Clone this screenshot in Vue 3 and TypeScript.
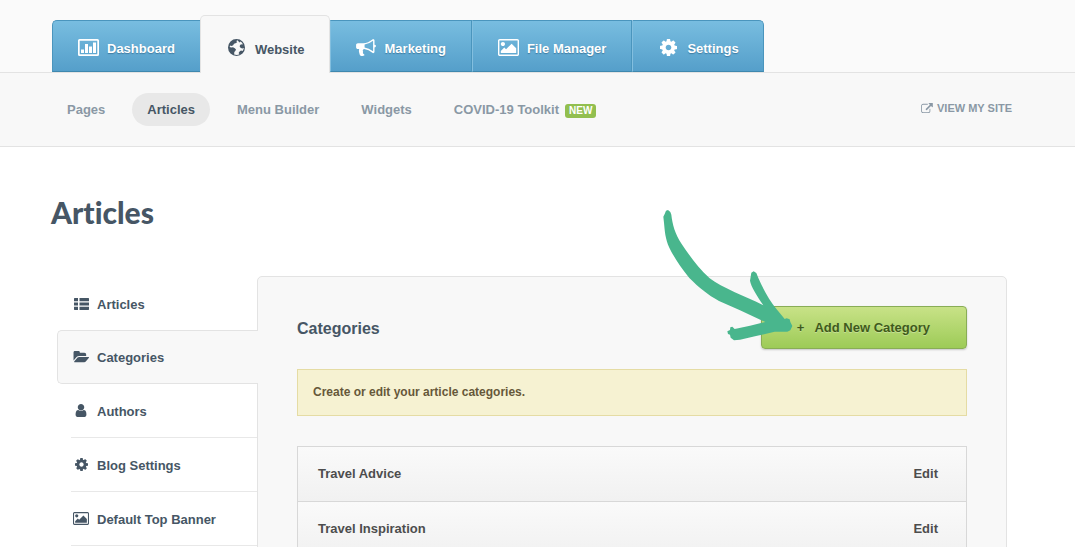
<script setup lang="ts">
interface Icon {
  box: string
  width: number
  height: number
  path: string
}

interface NavItem {
  label: string
  icon: Icon
  active?: boolean
}

const picturePath =
  'M640 576q0 80-56 136t-136 56-136-56-56-136 56-136 136-56 136 56 56 136zm1024 384v448h-1408v-192l320-320 160 160 512-512zm96-704h-1600q-13 0-22.5 9.5t-9.5 22.5v1216q0 13 9.5 22.5t22.5 9.5h1600q13 0 22.5-9.5t9.5-22.5v-1216q0-13-9.5-22.5t-22.5-9.5zm160 32v1216q0 66-47 113t-113 47h-1600q-66 0-113-47t-47-113v-1216q0-66 47-113t113-47h1600q66 0 113 47t47 113z'
const cogPath =
  'M1152 896q0-106-75-181t-181-75-181 75-75 181 75 181 181 75 181-75 75-181zm512-109v222q0 12-8 23t-20 13l-185 28q-19 54-39 91 35 50 107 138 10 12 10 25t-9 23q-27 37-99 108t-94 71q-12 0-26-9l-138-108q-44 23-91 38-16 136-29 186-7 28-36 28h-222q-14 0-24.5-8.5t-11.5-21.5l-28-184q-49-16-90-37l-141 107q-10 9-25 9-14 0-25-11-126-114-165-168-7-10-7-23 0-12 8-23 15-21 51-66.5t54-70.5q-27-50-41-99l-183-27q-13-2-21-12.5t-8-23.5v-222q0-12 8-23t19-13l186-28q14-46 39-92-40-57-107-138-10-12-10-24 0-10 9-23 26-36 98.5-107.5t94.5-71.5q13 0 26 10l138 107q44-23 91-38 16-136 29-186 7-28 36-28h222q14 0 24.5 8.5t11.5 21.5l28 184q49 16 90 37l142-107q9-9 24-9 13 0 25 10 129 119 165 170 7 8 7 22 0 12-8 23-15 21-51 66.5t-54 70.5q26 50 41 98l183 28q13 2 21 12.5t8 23.5z'

const tabs: NavItem[] = [
  {
    label: 'Dashboard',
    icon: {
      box: '0 0 21 17',
      width: 21,
      height: 17,
      path: 'M1.5 0h18a1.5 1.5 0 0 1 1.5 1.5v14a1.5 1.5 0 0 1-1.5 1.5h-18a1.5 1.5 0 0 1-1.5-1.5v-14a1.5 1.5 0 0 1 1.5-1.5zM1.7 1.7v13.6h17.6v-13.6zM3 10.500h3v3.500h-3zM7 5h3v9h-3zM11 7.500h3v6.500h-3zM15 3.500h3v10.500h-3z',
    },
  },
  {
    label: 'Website',
    active: true,
    icon: {
      box: '0 0 17 17',
      width: 17,
      height: 17,
      path: 'M8.500 0a8.500 8.500 0 1 1 0 17a8.500 8.500 0 1 1 0-17zM9.500 1.200L8.300 2L9.200 3.200L7.500 4.200L6 4.800L5.200 6.300L3.600 6.900L2.200 6.400L1.600 8L3.200 8.600L5 8.300L6.800 9.200L8 10.600L7.300 12L6.300 13L6.200 15.500C8 16.200 10 16.100 11.500 15.300L10.600 14L11.600 12.600L13 11.600L14.600 12A7.600 7.600 0 0 0 15.900 9L14.200 9.600L12.500 8.800L11.600 7.300L12.300 5.800L14 5.200L15 5.500A7.500 7.500 0 0 0 12.600 2.500L11.500 3.500L10.600 2.600Z',
    },
  },
  {
    label: 'Marketing',
    icon: {
      box: '0 128 1792 1536',
      width: 20,
      height: 17,
      path: 'M1664 640q53 0 90.5 37.5t37.5 90.5-37.5 90.5-90.5 37.5v384q0 52-38 90t-90 38q-417-347-812-380-58 19-91 66t-31 100.5 40 92.5q-20 33-23 65.5t6 58 33.5 55 48 50 61.5 50.5q-29 58-111.5 83t-168.5 11.5-132-55.5q-7-23-29.5-87.5t-32-94.5-23-89-15-101 3.5-98.5 22-110.5h-122q-66 0-113-47t-47-113v-192q0-66 47-113t113-47h480q435 0 896-384 52 0 90 38t38 90v384zm-128 604v-954q-394 302-768 343v270q377 42 768 341z',
    },
  },
  { label: 'File Manager', icon: { box: '0 128 1920 1536', width: 21, height: 17, path: picturePath } },
  { label: 'Settings', icon: { box: '128 128 1536 1536', width: 17, height: 17, path: cogPath } },
]

const sections: { label: string; active?: boolean; badge?: string }[] = [
  { label: 'Pages' },
  { label: 'Articles', active: true },
  { label: 'Menu Builder' },
  { label: 'Widgets' },
  { label: 'COVID-19 Toolkit', badge: 'NEW' },
]

const sideItems: NavItem[] = [
  {
    label: 'Articles',
    icon: {
      box: '0 0 15 12',
      width: 15,
      height: 12,
      path: 'M.5 0h3.500v3.200h-4v-2.700zM5.500 0h9l.5.5v2.700h-9.500zM0 4.400h4v3.200h-4zM5.500 4.400h9.500v3.200h-9.500zM0 8.800h4v3.200h-3.500l-.5-.5zM5.500 8.800h9.500v2.700l-.5.5h-9z',
    },
  },
  {
    label: 'Categories',
    active: true,
    icon: {
      box: '0 256 1943 1280',
      width: 16,
      height: 12,
      path: 'M1943 952q0 31-31 66l-336 396q-43 51-120.5 86.5t-143.5 35.5h-1088q-34 0-60.5-13t-26.5-43q0-31 31-66l336-396q43-51 120.5-86.5t143.5-35.5h1088q34 0 60.5 13t26.5 43zm-343-344v160h-832q-94 0-197 47.5t-164 119.5l-337 396-5 6q0-4-.5-12.5t-.5-12.5v-960q0-92 66-158t158-66h320q92 0 158 66t66 158v32h544q92 0 158 66t66 158z',
    },
  },
  {
    label: 'Authors',
    icon: {
      box: '256 128 1280 1536',
      width: 12,
      height: 13,
      path: 'M1536 1399q0 109-62.5 187t-150.5 78h-854q-88 0-150.5-78t-62.5-187q0-85 8.5-160.5t31.5-152 58.5-131 94-89 134.5-34.5q131 128 313 128t313-128q76 0 134.5 34.5t94 89 58.5 131 31.5 152 8.5 160.5zm-256-887q0 159-112.5 271.5t-271.5 112.5-271.5-112.5-112.5-271.5 112.5-271.5 271.5-112.5 271.5 112.5 112.5 271.5z',
    },
  },
  { label: 'Blog Settings', icon: { box: '128 128 1536 1536', width: 13, height: 13, path: cogPath } },
  { label: 'Default Top Banner', icon: { box: '0 128 1920 1536', width: 16, height: 13, path: picturePath } },
]

const categories: string[] = ['Travel Advice', 'Travel Inspiration']
</script>

<template>
  <div class="page">
    <header class="top">
      <nav class="tabs" aria-label="Main">
        <a v-for="tab in tabs" :key="tab.label" href="#" class="tab" :class="{ active: tab.active }">
          <span class="tab-icon">
            <svg :viewBox="tab.icon.box" :width="tab.icon.width" :height="tab.icon.height" aria-hidden="true">
              <path :d="tab.icon.path" fill="currentColor" fill-rule="evenodd" />
            </svg>
          </span>
          <span>{{ tab.label }}</span>
        </a>
      </nav>
    </header>

    <div class="subnav">
      <nav class="sections" aria-label="Website">
        <a v-for="s in sections" :key="s.label" href="#" class="section" :class="{ active: s.active }">
          {{ s.label }}<span v-if="s.badge" class="badge">{{ s.badge }}</span>
        </a>
      </nav>
      <a href="#" class="view-site">
        <svg viewBox="0 0 1792 1536" width="12" height="10" aria-hidden="true">
          <path
            fill="currentColor"
            d="M1408 928v320q0 119-84.5 203.5t-203.5 84.5h-832q-119 0-203.5-84.5t-84.500-203.500v-832q0-119 84.500-203.500t203.500-84.500h704q14 0 23 9t9 23v64q0 14-9 23t-23 9h-704q-66 0-113 47t-47 113v832q0 66 47 113t113 47h832q66 0 113-47t47-113v-320q0-14 9-23t23-9h64q14 0 23 9t9 23zm384-864v512q0 26-19 45t-45 19-45-19l-176-176-652 652q-10 10-23 10t-23-10l-114-114q-10-10-10-23t10-23l652-652-176-176q-19-19-19-45t19-45 45-19h512q26 0 45 19t19 45z"
          />
        </svg>
        <span>VIEW MY SITE</span>
      </a>
    </div>

    <main>
      <h1>Articles</h1>
      <div class="columns">
        <nav class="side" aria-label="Articles">
          <a v-for="item in sideItems" :key="item.label" href="#" class="side-item" :class="{ active: item.active }">
            <span class="side-icon">
              <svg :viewBox="item.icon.box" :width="item.icon.width" :height="item.icon.height" aria-hidden="true">
                <path :d="item.icon.path" fill="currentColor" />
              </svg>
            </span>
            <span>{{ item.label }}</span>
          </a>
        </nav>

        <section class="panel">
          <div class="panel-head">
            <h2>Categories</h2>
            <div class="action">
              <button type="button" class="add"><span>+</span><span>Add New Category</span></button>
              <svg class="arrow" viewBox="0 0 540 480" width="180" height="160" aria-hidden="true">
                <path
                  fill="#49b68d"
                  d="M74 42L78 32L84 30L91 36L94 44C97 72 105 102 125 132C148 166 174 203 209 235C246 264 315 288 370 316C350 286 333 260 330 242L334 218L341 214L349 219L355 234C371 271 390 303 410 328L434 357L440 355L449 358L451 366L457 378L451 391L442 395L404 395L345 409L300 419L282 421L272 413L270 404L264 402L262 394L270 390L271 382L277 380L284 387L330 377L376 366L300 331L237 303C203 284 178 264 148 234C122 202 102 172 88 143C76 118 74 90 72 68L70 50Z"
                />
              </svg>
            </div>
          </div>

          <p class="notice">Create or edit your article categories.</p>

          <ul class="list">
            <li v-for="c in categories" :key="c">
              <span>{{ c }}</span>
              <a href="#" :aria-label="'Edit ' + c">Edit</a>
            </li>
          </ul>
        </section>
      </div>
    </main>
  </div>
</template>

<style>
html {
  scrollbar-width: none;
}
body {
  margin: 0;
  background: #fff;
}
</style>

<style scoped>
.page {
  font: bold 13px/16px 'Liberation Sans', Arial, sans-serif;
  color: #465665;
}
a {
  color: inherit;
  text-decoration: none;
}
svg {
  display: block;
}
.top {
  padding: 15px 52px 0;
  background: #fafafa;
  border-bottom: 1px solid #e3e3e3;
}
.tabs {
  display: flex;
  align-items: flex-end;
  margin-bottom: -1px;
}
.tab {
  box-sizing: border-box;
  display: flex;
  align-items: center;
  gap: 8px;
  height: 52px;
  margin-bottom: 1px;
  padding: 6px 25px 0;
  color: #fff;
  text-shadow: 0 1px 1px rgba(30, 80, 115, 0.5);
  background: linear-gradient(#78bde0, #559fca);
  border: 1px solid #4a95bd;
  border-left-color: #83bfdf;
  border-right-width: 0;
  border-bottom-color: #3f88af;
}
.tab:first-child {
  border-left-color: #4a95bd;
  border-top-left-radius: 5px;
}
.tab:last-child {
  padding-right: 24px;
  border-right-width: 1px;
  border-top-right-radius: 5px;
}
.tab:nth-child(n + 3):not(:last-child) {
  border-right-width: 1px;
}
.tab.active {
  height: 58px;
  margin-bottom: 0;
  padding: 10px 24px 0 25px;
  color: #465665;
  text-shadow: none;
  background: #f8f8f8;
  border: 1px solid #e3e3e3;
  border-bottom: 0;
  border-radius: 5px 5px 0 0;
}
.tab-icon {
  display: flex;
  justify-content: center;
  width: 21px;
  padding-bottom: 4px;
}
.subnav {
  display: flex;
  align-items: center;
  justify-content: space-between;
  padding: 20px 63px 20px 52px;
  background: #f8f8f8;
  border-bottom: 1px solid #e3e3e3;
  color: #8a98a5;
}
.sections {
  display: flex;
  gap: 12px;
}
.section {
  display: flex;
  align-items: center;
  height: 33px;
  padding: 0 15px;
  border-radius: 17px;
}
.section.active {
  background: #e8e8e8;
  color: #465665;
}
.badge {
  margin: 3px 0 0 6px;
  padding: 0 4px;
  border-radius: 3px;
  background: #92bf4f;
  color: #fff;
  font-size: 10px;
  line-height: 14px;
}
.view-site {
  display: flex;
  align-items: center;
  gap: 4px;
  padding-bottom: 4px;
  font-size: 11px;
}
main {
  padding: 47px 68px 0 57px;
}
h1 {
  margin: 0 0 46px -6px;
  font: 900 30px/36px Lato, sans-serif;
  font-variant-ligatures: none;
}
.columns {
  display: grid;
  grid-template-columns: 200px 1fr;
}
.side {
  padding-top: 1px;
}
.side-item {
  box-sizing: border-box;
  display: flex;
  align-items: center;
  gap: 6px;
  height: 54px;
  margin-left: 14px;
  padding-top: 2px;
  border-bottom: 1px solid #e8e8e8;
}
.side-item:first-child {
  height: 53px;
  border-bottom: 0;
}
.side-item.active {
  position: relative;
  margin: 0 -1px 0 0;
  padding-left: 13px;
  background: #f8f8f8;
  border: 1px solid #e3e3e3;
  border-right: 0;
  border-radius: 5px 0 0 5px;
}
.side-icon {
  display: flex;
  justify-content: center;
  width: 20px;
  padding-bottom: 2px;
}
.panel {
  padding: 29px 39px;
  background: #f8f8f8;
  border: 1px solid #e3e3e3;
  border-radius: 5px;
}
.panel-head {
  display: flex;
  align-items: center;
  justify-content: space-between;
}
h2 {
  margin: 0;
  padding-top: 2px;
  font-size: 16px;
  line-height: 20px;
}
.action {
  position: relative;
}
.add {
  display: flex;
  align-items: center;
  gap: 10px;
  height: 43px;
  padding: 0 36px 0 35px;
  font: inherit;
  color: #3f5a1c;
  text-shadow: 0 1px 0 rgba(255, 255, 255, 0.3);
  background: linear-gradient(#c8e287, #9dcb57);
  border: 1px solid #89ad56;
  border-radius: 4px;
  box-shadow: 0 1px 2px rgba(0, 0, 0, 0.2);
}
.arrow {
  position: absolute;
  left: -121px;
  top: -106px;
  pointer-events: none;
}
.notice {
  margin: 20px 0 30px;
  padding: 14px 15px 15px;
  font-size: 12px;
  color: #66583a;
  background: #f6f2d2;
  border: 1px solid #e5dca4;
}
.list {
  margin: 0;
  padding: 0;
  list-style: none;
  color: #4d4d4d;
  border: 1px solid #d8d8d8;
}
.list li {
  display: flex;
  justify-content: space-between;
  padding: 19px 28px 19px 20px;
  background: linear-gradient(#fafafa, #f1f1f1);
}
.list li + li {
  border-top: 1px solid #d8d8d8;
}
</style>
